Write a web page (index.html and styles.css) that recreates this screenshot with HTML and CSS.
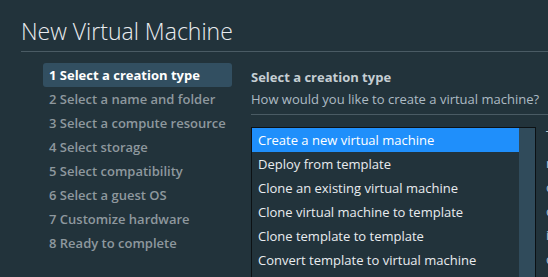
FILE: index.html
```html
<!DOCTYPE html>
<html lang="en">
<head>
  <meta charset="UTF-8" />
  <title>New Virtual Machine</title>
  <link rel="stylesheet" href="styles.css">
</head>
<body>
  <div class="wizard">
    <h1 class="wizard-title">New Virtual Machine</h1>

    <div class="wizard-body">
      <ul class="steps">
        <li class="step active">1 Select a creation type</li>
        <li class="step">2 Select a name and folder</li>
        <li class="step">3 Select a compute resource</li>
        <li class="step">4 Select storage</li>
        <li class="step">5 Select compatibility</li>
        <li class="step">6 Select a guest OS</li>
        <li class="step">7 Customize hardware</li>
        <li class="step">8 Ready to complete</li>
      </ul>

      <div class="page">
        <div class="page-head">
          <h2 class="page-title">Select a creation type</h2>
          <p class="page-desc">How would you like to create a virtual machine?</p>
        </div>

        <div class="page-main">
          <div class="type-list">
            <ul class="types">
              <li class="type selected">Create a new virtual machine</li>
              <li class="type">Deploy from template</li>
              <li class="type">Clone an existing virtual machine</li>
              <li class="type">Clone virtual machine to template</li>
              <li class="type">Clone template to template</li>
              <li class="type">Convert template to virtual machine</li>
            </ul>
            <div class="scrollbar"></div>
          </div>

          <div class="type-info">
            <p class="info-lead">This option guides you through creating a</p>
            <p>new virtual machine. You will be able to</p>
            <p>customize processors, memory, network</p>
            <p>connections, and storage. You will need to</p>
            <p>install a guest operating system after</p>
            <p>creation.</p>
          </div>
        </div>
      </div>
    </div>
  </div>
</body>
</html>
```

FILE: styles.css
```css
body {
  margin: 0;
  padding: 0;
  background: #22333b;
  font-family: 'Open Sans', 'Noto Sans', sans-serif;
  color: #e9ecef;
  overflow: hidden;
  height: 277px;
}

.wizard {
  padding-left: 21px;
}

.wizard-title {
  margin: 0;
  padding-top: 18px;
  padding-bottom: 7px;
  font-size: 23px;
  font-weight: 300;
  line-height: 26px;
  color: #e9ecef;
  border-bottom: 1px solid #4a5b64;
}

.wizard-body {
  display: flex;
  padding-top: 11px;
}

.steps {
  list-style: none;
  margin: 0 0 0 22px;
  padding: 0;
  width: 189px;
  flex-shrink: 0;
}

.step {
  height: 24px;
  line-height: 24px;
  padding-left: 6px;
  font-size: 13px;
  font-weight: 600;
  color: #8e989e;
  border-radius: 3px;
  white-space: nowrap;
}

.step.active {
  background: #324f61;
  color: #ffffff;
  font-weight: 700;
}

.page {
  margin-left: 19px;
  flex: 1;
  min-width: 0;
}

.page-head {
  padding-top: 4px;
  padding-bottom: 3px;
  border-bottom: 1px solid #4a5b64;
}

.page-title {
  margin: 0;
  font-size: 13px;
  font-weight: 700;
  line-height: 20px;
  color: #c5ced3;
}

.page-desc {
  margin: 0;
  font-size: 13px;
  line-height: 24px;
  color: #adbbc4;
  white-space: nowrap;
}

.page-main {
  display: flex;
  gap: 10px;
  padding-top: 12px;
}

.type-list {
  display: flex;
  width: 283px;
  height: 160px;
  flex-shrink: 0;
  border: 1px solid #0c1114;
  border-bottom: none;
}

.types {
  list-style: none;
  margin: 0;
  padding: 0;
  flex: 1;
}

.type {
  height: 24px;
  line-height: 24px;
  padding-left: 6px;
  font-size: 13px;
  color: #e9ecef;
  white-space: nowrap;
}

.type.selected {
  background: #1f8ffb;
  color: #ffffff;
}

.scrollbar {
  width: 16px;
  background: #304b5b;
}

.type-info {
  font-size: 13px;
  color: #a9c0d6;
  white-space: nowrap;
}

.type-info p {
  margin: 0;
  line-height: 24px;
}

.type-info .info-lead {
  margin-top: -4px;
  margin-bottom: 4px;
  color: #c5ced3;
}
```
